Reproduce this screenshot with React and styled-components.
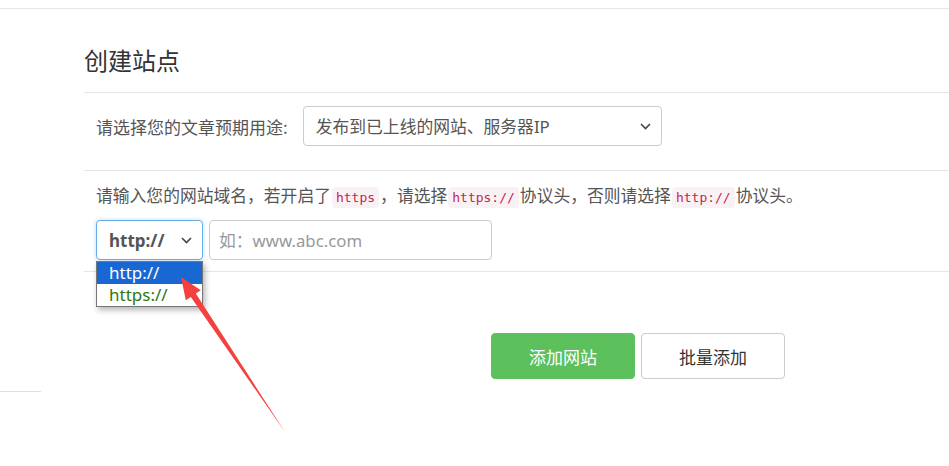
import React from "react";
import styled, { createGlobalStyle } from "styled-components";

const GlobalStyle = createGlobalStyle`
  html, body {
    margin: 0;
    padding: 0;
    background: #fff;
    font-family: "Noto Sans", "Noto Sans CJK SC", sans-serif;
    color: #333;
    overflow: hidden;
  }
`;

const Page = styled.div`
  position: relative;
  width: 949px;
  height: 466px;
  padding-top: 8px;
  box-sizing: border-box;
`;

const TopRule = styled.div`
  border-top: 1px solid #e5e5e5;
`;

const Panel = styled.div`
  padding-left: 84px;
`;

const Title = styled.h2`
  margin: 0;
  padding: 34px 0 15px;
  font-size: 24px;
  line-height: 34px;
  font-weight: normal;
  color: #333;
  font-family: "Noto Sans CJK SC", sans-serif;
  border-bottom: 1px solid #e5e5e5;
`;

const Row = styled.div`
  display: flex;
  flex-direction: ${(p) => (p.column ? "column" : "row")};
  align-items: ${(p) => (p.column ? "flex-start" : "center")};
  gap: ${(p) => (p.column ? "10px" : "15px")};
  padding: ${(p) => p.pad};
  padding-left: 12px;
  border-bottom: 1px solid #e5e5e5;
`;

const Label = styled.span`
  font-size: 17px;
  color: #555;
  font-family: "Noto Sans CJK SC", sans-serif;
`;

const Hint = styled.p`
  margin: 0;
  font-size: 16.8px;
  line-height: 24px;
  color: #555;
  font-family: "Noto Sans CJK SC", sans-serif;
`;

const Code = styled.code`
  font-family: "DejaVu Sans Mono", monospace;
  font-size: 13px;
  padding: 3px 4px;
  margin: 0 1px;
  color: #c7254e;
  background: #f9f2f4;
  border-radius: 4px;
`;

const SelectBox = styled.div`
  position: relative;
  display: flex;
  align-items: center;
  justify-content: space-between;
  box-sizing: border-box;
  width: ${(p) => p.w}px;
  height: 40px;
  padding: 0 10px 0 12px;
  border: 1px solid ${(p) => (p.focused ? "#66afe9" : "#ccc")};
  border-radius: 4px;
  box-shadow: ${(p) =>
    p.focused ? "0 0 4px rgba(102, 175, 233, 0.45)" : "none"};
  color: #555;
  font-size: ${(p) => (p.bold ? "17px" : "16.8px")};
  font-weight: ${(p) => (p.bold ? 700 : 400)};
  font-family: "Noto Sans", "Noto Sans CJK SC", sans-serif;
  background: #fff;
`;

const InputRow = styled.div`
  display: flex;
  gap: 6px;
`;

const TextInput = styled.div`
  box-sizing: border-box;
  width: 283px;
  height: 40px;
  padding: 0 9px;
  display: flex;
  align-items: center;
  border: 1px solid #ccc;
  border-radius: 4px;
  color: #999;
  font-size: 16.8px;
  font-family: "Noto Sans", "Noto Sans CJK SC", sans-serif;
`;

const OptionList = styled.ul`
  position: absolute;
  top: 40px;
  left: -1px;
  width: 107px;
  margin: 0;
  padding: 0;
  list-style: none;
  background: #fff;
  border: 1px solid #767676;
  box-shadow: 2px 3px 6px rgba(0, 0, 0, 0.3);
  box-sizing: border-box;
  z-index: 2;
`;

const Option = styled.li`
  height: 22px;
  line-height: 22px;
  padding-left: 12px;
  font-size: 17px;
  font-weight: 400;
  background: ${(p) => (p.active ? "#1967d2" : "#fff")};
  color: ${(p) => (p.active ? "#fff" : p.color || "#333")};
`;

const Actions = styled.div`
  display: flex;
  gap: 6px;
  margin: 61px 0 0 407px;
`;

const Button = styled.button`
  width: 144px;
  height: 46px;
  border-radius: 4px;
  border: 1px solid ${(p) => (p.primary ? "#5cc05c" : "#ccc")};
  background: ${(p) => (p.primary ? "#5cc05c" : "#fff")};
  color: ${(p) => (p.primary ? "#fff" : "#333")};
  font-size: 17px;
  font-family: "Noto Sans CJK SC", sans-serif;
  cursor: pointer;
`;

const SideRule = styled.div`
  width: 41px;
  margin-top: 12px;
  border-top: 1px solid #e0e0e0;
`;

const Arrow = styled.svg`
  position: absolute;
  left: 0;
  top: 0;
  pointer-events: none;
  z-index: 3;
`;

const Chevron = () => (
  <svg width="11" height="7" viewBox="0 0 11 7">
    <path d="M1 1l4.5 4.5L10 1" fill="none" stroke="#444" strokeWidth="1.6" />
  </svg>
);

const App = () => (
  <Page>
    <GlobalStyle />
    <TopRule />
    <Panel>
      <Title>创建站点</Title>
      <Row pad="13px 0 24px">
        <Label>请选择您的文章预期用途:</Label>
        <SelectBox w={359}>
          <span>发布到已上线的网站、服务器IP</span>
          <Chevron />
        </SelectBox>
      </Row>
      <Row column pad="12px 0 11px">
        <Hint>
          请输入您的网站域名，若开启了<Code>https</Code>，请选择<Code>https://</Code>协议头，否则请选择<Code>http://</Code>协议头。
        </Hint>
        <InputRow>
          <SelectBox w={107} focused bold>
            <span>http://</span>
            <Chevron />
            <OptionList>
              <Option active>http://</Option>
              <Option color="#2a7a10">https://</Option>
            </OptionList>
          </SelectBox>
          <TextInput>如：www.abc.com</TextInput>
        </InputRow>
      </Row>
      <Actions>
        <Button primary>添加网站</Button>
        <Button>批量添加</Button>
      </Actions>
    </Panel>
    <SideRule />
    <Arrow width="949" height="466">
      <polygon
        points="181,277 185.8,300.3 190.8,297 285,432 195.8,293.6 200.8,290.3"
        fill="#f54040"
      />
    </Arrow>
  </Page>
);

export default App;
